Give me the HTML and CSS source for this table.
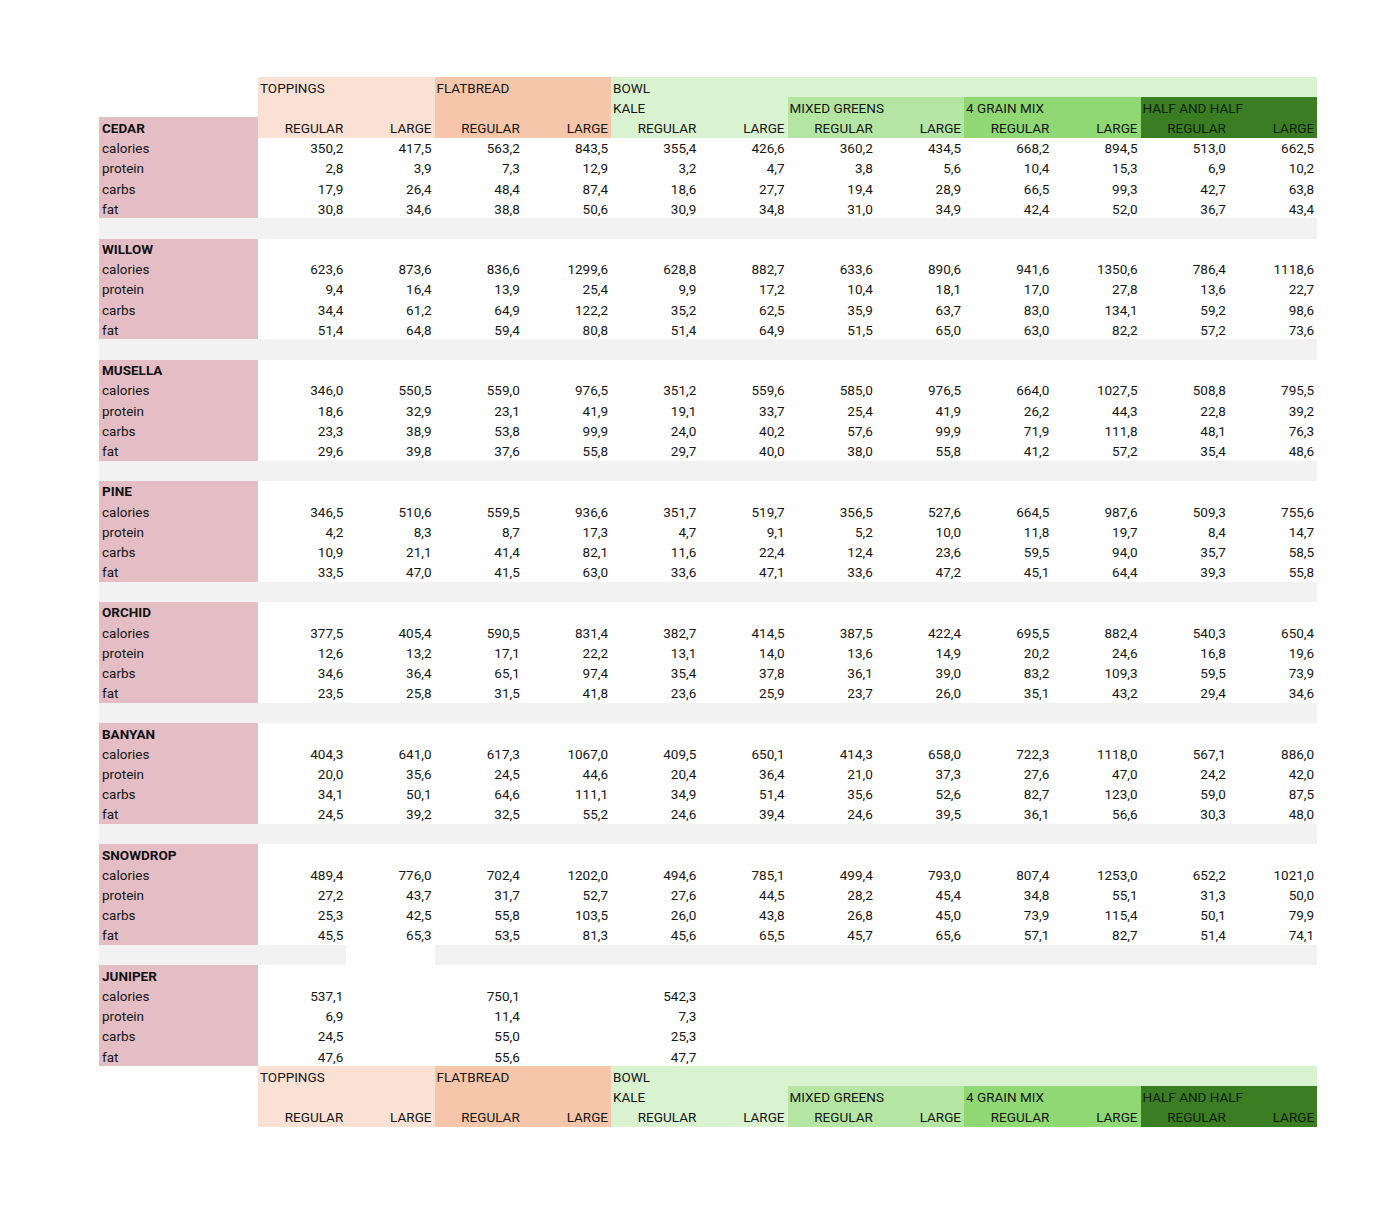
FILE: index.html
```html
<!DOCTYPE html>
<html lang="en">
<head>
<meta charset="utf-8">
<title>Nutrition</title>
<link rel="stylesheet" href="styles.css">
</head>
<body>
<table class="sheet">
<colgroup><col class="c-label"><col><col><col><col><col><col><col><col><col><col><col><col></colgroup>
<tbody>
<tr><td></td><td colspan="2" class="h top">TOPPINGS</td><td colspan="2" class="h fb">FLATBREAD</td><td colspan="8" class="h bowl">BOWL</td></tr>
<tr><td></td><td colspan="2" class="top"></td><td colspan="2" class="fb"></td><td colspan="2" class="h bowl">KALE</td><td colspan="2" class="h mg">MIXED GREENS</td><td colspan="2" class="h gm">4 GRAIN MIX</td><td colspan="2" class="h hh">HALF AND HALF</td></tr>
<tr><td class="lbl name">CEDAR</td><td class="top n">REGULAR</td><td class="top n">LARGE</td><td class="fb n">REGULAR</td><td class="fb n">LARGE</td><td class="bowl n">REGULAR</td><td class="bowl n">LARGE</td><td class="mg n">REGULAR</td><td class="mg n">LARGE</td><td class="gm n">REGULAR</td><td class="gm n">LARGE</td><td class="hh n">REGULAR</td><td class="hh n">LARGE</td></tr>
<tr><td class="lbl">calories</td><td class="n">350,2</td><td class="n">417,5</td><td class="n">563,2</td><td class="n">843,5</td><td class="n">355,4</td><td class="n">426,6</td><td class="n">360,2</td><td class="n">434,5</td><td class="n">668,2</td><td class="n">894,5</td><td class="n">513,0</td><td class="n">662,5</td></tr>
<tr><td class="lbl">protein</td><td class="n">2,8</td><td class="n">3,9</td><td class="n">7,3</td><td class="n">12,9</td><td class="n">3,2</td><td class="n">4,7</td><td class="n">3,8</td><td class="n">5,6</td><td class="n">10,4</td><td class="n">15,3</td><td class="n">6,9</td><td class="n">10,2</td></tr>
<tr><td class="lbl">carbs</td><td class="n">17,9</td><td class="n">26,4</td><td class="n">48,4</td><td class="n">87,4</td><td class="n">18,6</td><td class="n">27,7</td><td class="n">19,4</td><td class="n">28,9</td><td class="n">66,5</td><td class="n">99,3</td><td class="n">42,7</td><td class="n">63,8</td></tr>
<tr><td class="lbl">fat</td><td class="n">30,8</td><td class="n">34,6</td><td class="n">38,8</td><td class="n">50,6</td><td class="n">30,9</td><td class="n">34,8</td><td class="n">31,0</td><td class="n">34,9</td><td class="n">42,4</td><td class="n">52,0</td><td class="n">36,7</td><td class="n">43,4</td></tr>
<tr class="gap"><td></td><td></td><td></td><td></td><td></td><td></td><td></td><td></td><td></td><td></td><td></td><td></td><td></td></tr>

<tr><td class="lbl name">WILLOW</td><td colspan="12"></td></tr>
<tr><td class="lbl">calories</td><td class="n">623,6</td><td class="n">873,6</td><td class="n">836,6</td><td class="n">1299,6</td><td class="n">628,8</td><td class="n">882,7</td><td class="n">633,6</td><td class="n">890,6</td><td class="n">941,6</td><td class="n">1350,6</td><td class="n">786,4</td><td class="n">1118,6</td></tr>
<tr><td class="lbl">protein</td><td class="n">9,4</td><td class="n">16,4</td><td class="n">13,9</td><td class="n">25,4</td><td class="n">9,9</td><td class="n">17,2</td><td class="n">10,4</td><td class="n">18,1</td><td class="n">17,0</td><td class="n">27,8</td><td class="n">13,6</td><td class="n">22,7</td></tr>
<tr><td class="lbl">carbs</td><td class="n">34,4</td><td class="n">61,2</td><td class="n">64,9</td><td class="n">122,2</td><td class="n">35,2</td><td class="n">62,5</td><td class="n">35,9</td><td class="n">63,7</td><td class="n">83,0</td><td class="n">134,1</td><td class="n">59,2</td><td class="n">98,6</td></tr>
<tr><td class="lbl">fat</td><td class="n">51,4</td><td class="n">64,8</td><td class="n">59,4</td><td class="n">80,8</td><td class="n">51,4</td><td class="n">64,9</td><td class="n">51,5</td><td class="n">65,0</td><td class="n">63,0</td><td class="n">82,2</td><td class="n">57,2</td><td class="n">73,6</td></tr>
<tr class="gap"><td></td><td></td><td></td><td></td><td></td><td></td><td></td><td></td><td></td><td></td><td></td><td></td><td></td></tr>

<tr><td class="lbl name">MUSELLA</td><td colspan="12"></td></tr>
<tr><td class="lbl">calories</td><td class="n">346,0</td><td class="n">550,5</td><td class="n">559,0</td><td class="n">976,5</td><td class="n">351,2</td><td class="n">559,6</td><td class="n">585,0</td><td class="n">976,5</td><td class="n">664,0</td><td class="n">1027,5</td><td class="n">508,8</td><td class="n">795,5</td></tr>
<tr><td class="lbl">protein</td><td class="n">18,6</td><td class="n">32,9</td><td class="n">23,1</td><td class="n">41,9</td><td class="n">19,1</td><td class="n">33,7</td><td class="n">25,4</td><td class="n">41,9</td><td class="n">26,2</td><td class="n">44,3</td><td class="n">22,8</td><td class="n">39,2</td></tr>
<tr><td class="lbl">carbs</td><td class="n">23,3</td><td class="n">38,9</td><td class="n">53,8</td><td class="n">99,9</td><td class="n">24,0</td><td class="n">40,2</td><td class="n">57,6</td><td class="n">99,9</td><td class="n">71,9</td><td class="n">111,8</td><td class="n">48,1</td><td class="n">76,3</td></tr>
<tr><td class="lbl">fat</td><td class="n">29,6</td><td class="n">39,8</td><td class="n">37,6</td><td class="n">55,8</td><td class="n">29,7</td><td class="n">40,0</td><td class="n">38,0</td><td class="n">55,8</td><td class="n">41,2</td><td class="n">57,2</td><td class="n">35,4</td><td class="n">48,6</td></tr>
<tr class="gap"><td></td><td></td><td></td><td></td><td></td><td></td><td></td><td></td><td></td><td></td><td></td><td></td><td></td></tr>

<tr><td class="lbl name">PINE</td><td colspan="12"></td></tr>
<tr><td class="lbl">calories</td><td class="n">346,5</td><td class="n">510,6</td><td class="n">559,5</td><td class="n">936,6</td><td class="n">351,7</td><td class="n">519,7</td><td class="n">356,5</td><td class="n">527,6</td><td class="n">664,5</td><td class="n">987,6</td><td class="n">509,3</td><td class="n">755,6</td></tr>
<tr><td class="lbl">protein</td><td class="n">4,2</td><td class="n">8,3</td><td class="n">8,7</td><td class="n">17,3</td><td class="n">4,7</td><td class="n">9,1</td><td class="n">5,2</td><td class="n">10,0</td><td class="n">11,8</td><td class="n">19,7</td><td class="n">8,4</td><td class="n">14,7</td></tr>
<tr><td class="lbl">carbs</td><td class="n">10,9</td><td class="n">21,1</td><td class="n">41,4</td><td class="n">82,1</td><td class="n">11,6</td><td class="n">22,4</td><td class="n">12,4</td><td class="n">23,6</td><td class="n">59,5</td><td class="n">94,0</td><td class="n">35,7</td><td class="n">58,5</td></tr>
<tr><td class="lbl">fat</td><td class="n">33,5</td><td class="n">47,0</td><td class="n">41,5</td><td class="n">63,0</td><td class="n">33,6</td><td class="n">47,1</td><td class="n">33,6</td><td class="n">47,2</td><td class="n">45,1</td><td class="n">64,4</td><td class="n">39,3</td><td class="n">55,8</td></tr>
<tr class="gap"><td></td><td></td><td></td><td></td><td></td><td></td><td></td><td></td><td></td><td></td><td></td><td></td><td></td></tr>

<tr><td class="lbl name">ORCHID</td><td colspan="12"></td></tr>
<tr><td class="lbl">calories</td><td class="n">377,5</td><td class="n">405,4</td><td class="n">590,5</td><td class="n">831,4</td><td class="n">382,7</td><td class="n">414,5</td><td class="n">387,5</td><td class="n">422,4</td><td class="n">695,5</td><td class="n">882,4</td><td class="n">540,3</td><td class="n">650,4</td></tr>
<tr><td class="lbl">protein</td><td class="n">12,6</td><td class="n">13,2</td><td class="n">17,1</td><td class="n">22,2</td><td class="n">13,1</td><td class="n">14,0</td><td class="n">13,6</td><td class="n">14,9</td><td class="n">20,2</td><td class="n">24,6</td><td class="n">16,8</td><td class="n">19,6</td></tr>
<tr><td class="lbl">carbs</td><td class="n">34,6</td><td class="n">36,4</td><td class="n">65,1</td><td class="n">97,4</td><td class="n">35,4</td><td class="n">37,8</td><td class="n">36,1</td><td class="n">39,0</td><td class="n">83,2</td><td class="n">109,3</td><td class="n">59,5</td><td class="n">73,9</td></tr>
<tr><td class="lbl">fat</td><td class="n">23,5</td><td class="n">25,8</td><td class="n">31,5</td><td class="n">41,8</td><td class="n">23,6</td><td class="n">25,9</td><td class="n">23,7</td><td class="n">26,0</td><td class="n">35,1</td><td class="n">43,2</td><td class="n">29,4</td><td class="n">34,6</td></tr>
<tr class="gap"><td></td><td></td><td></td><td></td><td></td><td></td><td></td><td></td><td></td><td></td><td></td><td></td><td></td></tr>

<tr><td class="lbl name">BANYAN</td><td colspan="12"></td></tr>
<tr><td class="lbl">calories</td><td class="n">404,3</td><td class="n">641,0</td><td class="n">617,3</td><td class="n">1067,0</td><td class="n">409,5</td><td class="n">650,1</td><td class="n">414,3</td><td class="n">658,0</td><td class="n">722,3</td><td class="n">1118,0</td><td class="n">567,1</td><td class="n">886,0</td></tr>
<tr><td class="lbl">protein</td><td class="n">20,0</td><td class="n">35,6</td><td class="n">24,5</td><td class="n">44,6</td><td class="n">20,4</td><td class="n">36,4</td><td class="n">21,0</td><td class="n">37,3</td><td class="n">27,6</td><td class="n">47,0</td><td class="n">24,2</td><td class="n">42,0</td></tr>
<tr><td class="lbl">carbs</td><td class="n">34,1</td><td class="n">50,1</td><td class="n">64,6</td><td class="n">111,1</td><td class="n">34,9</td><td class="n">51,4</td><td class="n">35,6</td><td class="n">52,6</td><td class="n">82,7</td><td class="n">123,0</td><td class="n">59,0</td><td class="n">87,5</td></tr>
<tr><td class="lbl">fat</td><td class="n">24,5</td><td class="n">39,2</td><td class="n">32,5</td><td class="n">55,2</td><td class="n">24,6</td><td class="n">39,4</td><td class="n">24,6</td><td class="n">39,5</td><td class="n">36,1</td><td class="n">56,6</td><td class="n">30,3</td><td class="n">48,0</td></tr>
<tr class="gap"><td></td><td></td><td></td><td></td><td></td><td></td><td></td><td></td><td></td><td></td><td></td><td></td><td></td></tr>

<tr><td class="lbl name">SNOWDROP</td><td colspan="12"></td></tr>
<tr><td class="lbl">calories</td><td class="n">489,4</td><td class="n">776,0</td><td class="n">702,4</td><td class="n">1202,0</td><td class="n">494,6</td><td class="n">785,1</td><td class="n">499,4</td><td class="n">793,0</td><td class="n">807,4</td><td class="n">1253,0</td><td class="n">652,2</td><td class="n">1021,0</td></tr>
<tr><td class="lbl">protein</td><td class="n">27,2</td><td class="n">43,7</td><td class="n">31,7</td><td class="n">52,7</td><td class="n">27,6</td><td class="n">44,5</td><td class="n">28,2</td><td class="n">45,4</td><td class="n">34,8</td><td class="n">55,1</td><td class="n">31,3</td><td class="n">50,0</td></tr>
<tr><td class="lbl">carbs</td><td class="n">25,3</td><td class="n">42,5</td><td class="n">55,8</td><td class="n">103,5</td><td class="n">26,0</td><td class="n">43,8</td><td class="n">26,8</td><td class="n">45,0</td><td class="n">73,9</td><td class="n">115,4</td><td class="n">50,1</td><td class="n">79,9</td></tr>
<tr><td class="lbl">fat</td><td class="n">45,5</td><td class="n">65,3</td><td class="n">53,5</td><td class="n">81,3</td><td class="n">45,6</td><td class="n">65,5</td><td class="n">45,7</td><td class="n">65,6</td><td class="n">57,1</td><td class="n">82,7</td><td class="n">51,4</td><td class="n">74,1</td></tr>
<tr class="gap"><td></td><td></td><td class="blank"></td><td></td><td></td><td></td><td></td><td></td><td></td><td></td><td></td><td></td><td></td></tr>

<tr><td class="lbl name">JUNIPER</td><td colspan="12"></td></tr>
<tr><td class="lbl">calories</td><td class="n">537,1</td><td></td><td class="n">750,1</td><td></td><td class="n">542,3</td><td colspan="7"></td></tr>
<tr><td class="lbl">protein</td><td class="n">6,9</td><td></td><td class="n">11,4</td><td></td><td class="n">7,3</td><td colspan="7"></td></tr>
<tr><td class="lbl">carbs</td><td class="n">24,5</td><td></td><td class="n">55,0</td><td></td><td class="n">25,3</td><td colspan="7"></td></tr>
<tr><td class="lbl">fat</td><td class="n">47,6</td><td></td><td class="n">55,6</td><td></td><td class="n">47,7</td><td colspan="7"></td></tr>

<tr><td></td><td colspan="2" class="h top">TOPPINGS</td><td colspan="2" class="h fb">FLATBREAD</td><td colspan="8" class="h bowl">BOWL</td></tr>
<tr><td></td><td colspan="2" class="top"></td><td colspan="2" class="fb"></td><td colspan="2" class="h bowl">KALE</td><td colspan="2" class="h mg">MIXED GREENS</td><td colspan="2" class="h gm">4 GRAIN MIX</td><td colspan="2" class="h hh">HALF AND HALF</td></tr>
<tr><td></td><td class="top n">REGULAR</td><td class="top n">LARGE</td><td class="fb n">REGULAR</td><td class="fb n">LARGE</td><td class="bowl n">REGULAR</td><td class="bowl n">LARGE</td><td class="mg n">REGULAR</td><td class="mg n">LARGE</td><td class="gm n">REGULAR</td><td class="gm n">LARGE</td><td class="hh n">REGULAR</td><td class="hh n">LARGE</td></tr>
</tbody>
</table>
</body>
</html>
```

FILE: styles.css
```css
html, body {
  margin: 0;
  padding: 0;
  background: #ffffff;
}

body {
  padding: 77px 0 0 99px;
  font-family: Roboto, "Liberation Sans", sans-serif;
  font-size: 13.5px;
  color: #161616;
}

.sheet {
  border-collapse: collapse;
  border-spacing: 0;
  table-layout: fixed;
  width: 1218px;
}

.sheet col {
  width: 88.25px;
}

.sheet col.c-label {
  width: 159px;
}

.sheet tr {
  height: 20.2px;
}

.sheet td {
  box-sizing: border-box;
  padding: 1px 3px 0 2px;
  height: 20.2px;
  line-height: 16px;
  white-space: nowrap;
  overflow: hidden;
  vertical-align: middle;
}

.sheet .n {
  text-align: right;
}

.sheet .h {
  text-align: left;
}

.sheet .lbl {
  background: #e5bec5;
  padding-left: 3px;
}

.sheet .name {
  font-weight: 700;
  color: #111111;
}

.sheet .top {
  background: #fae1d4;
}

.sheet .fb {
  background: #f6c6aa;
}

.sheet .bowl {
  background: #d9f2d0;
}

.sheet .mg {
  background: #b4e5a2;
}

.sheet .gm {
  background: #8fd874;
}

.sheet .hh {
  background: #3a7d23;
  color: #10200b;
}

.sheet .gap td {
  background: #f2f2f2;
}

.sheet .gap td.blank {
  background: #ffffff;
}
```
